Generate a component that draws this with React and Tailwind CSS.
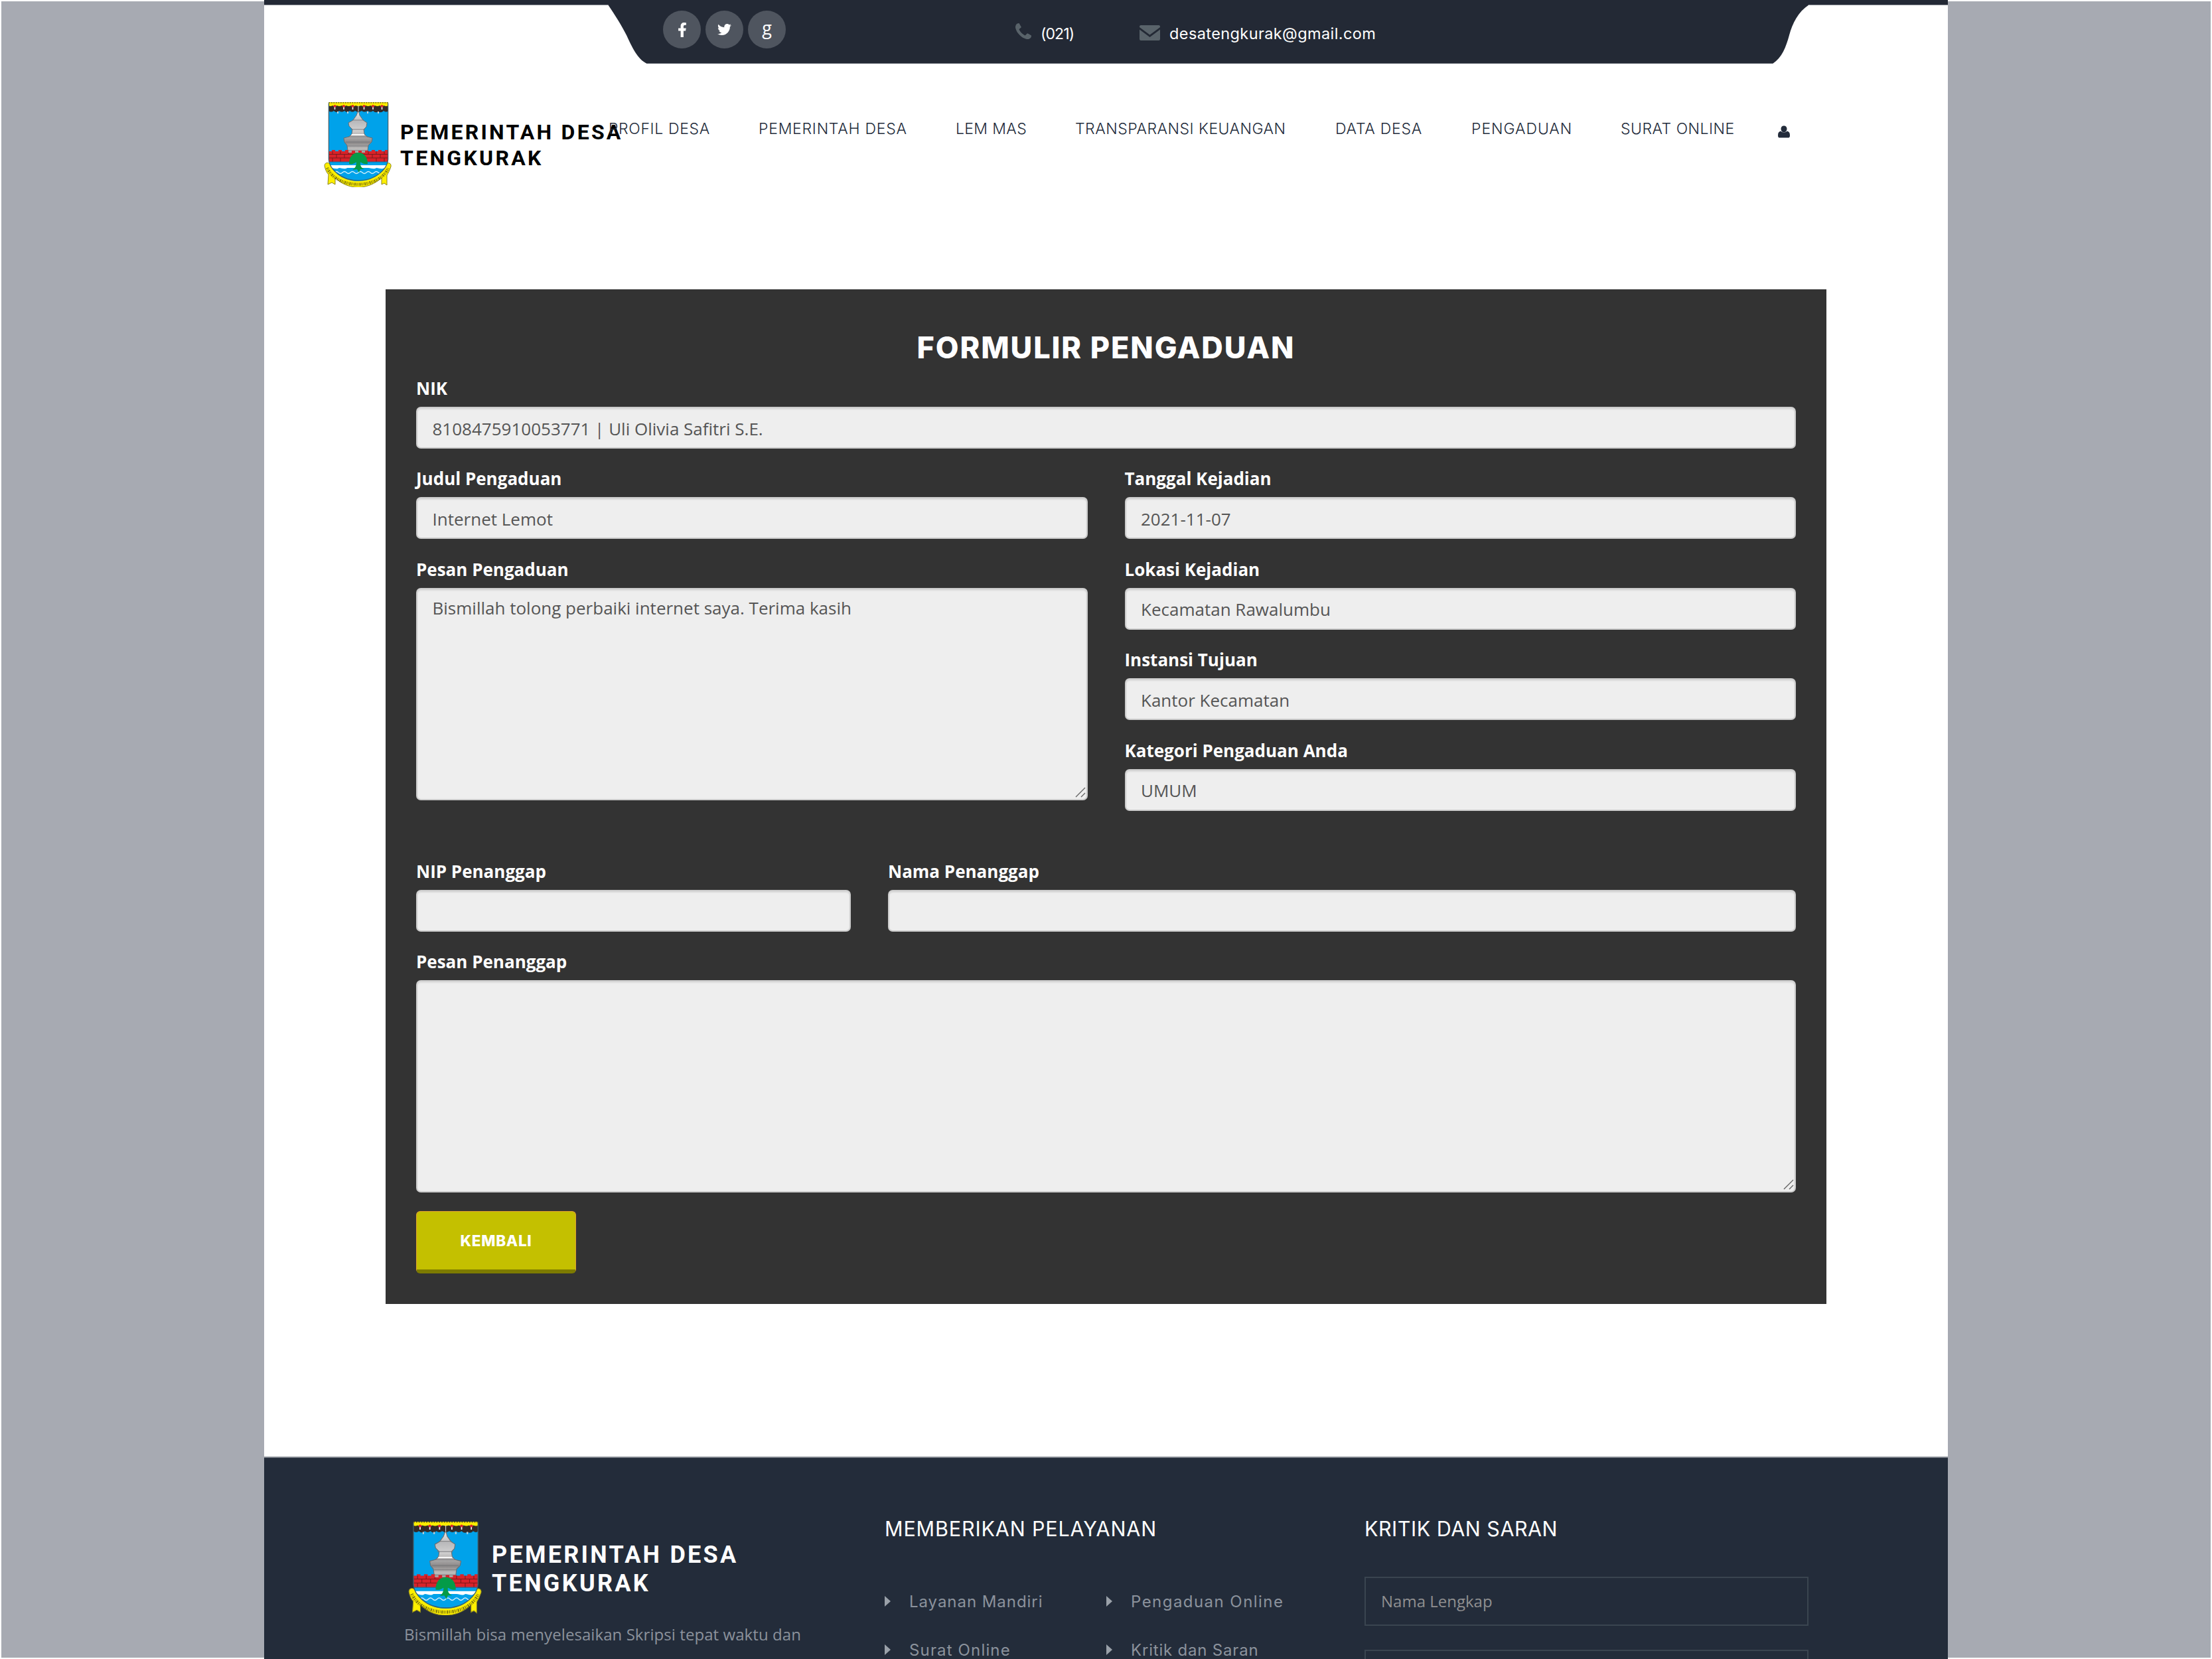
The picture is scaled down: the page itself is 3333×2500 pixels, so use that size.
import { FaFacebookF, FaTwitter } from "react-icons/fa";

function Crest({ className, id }) {
  const drops = [16.5, 30, 43.5, 60.5, 74, 87.5];
  return (
    <svg viewBox="0 0 102 128" preserveAspectRatio="none" className={className}>
      <defs>
        <clipPath id={`${id}-shield`}>
          <path d="M7.3 0H96.7V86C96 99 80 119 52 119C24 119 8 99 7.3 86Z" />
        </clipPath>
        <linearGradient id={`${id}-stone`} x1="0" x2="0" y1="0" y2="1">
          <stop offset="0" stopColor="#f4f4f4" />
          <stop offset="0.25" stopColor="#b9b9bb" />
          <stop offset="0.45" stopColor="#d0d0d0" />
          <stop offset="0.6" stopColor="#a9a7a7" />
          <stop offset="0.72" stopColor="#8b8888" />
          <stop offset="0.85" stopColor="#bdbbba" />
          <stop offset="1" stopColor="#999796" />
        </linearGradient>
      </defs>
      <path d="M1 96C1 91 6 90 9 93C20 122 84 122 93 93C97 90 102 92 101 97C99 103 97 107 95 110V125L91 122L87 124V114C66 133 37 133 17 114V124L12 121L6 124L7 109C4 106 2 101 1 96Z" fill="#fff000" stroke="#8a8420" strokeWidth="1" />
      <g clipPath={`url(#${id}-shield)`}>
        <rect width="102" height="128" fill="#00a2ea" />
        <path d="M52 12L54 20L57 24L59 27L65 31L64 37L60 41L61 48L65 52L73 54L72 60L67 65L66 73V80H36V73L35 65L31 60L30 54L38 52L42 48L43 41L38 36L37 31L44 27L46 24L49 20Z" fill={`url(#${id}-stone)`} stroke="#6d6d70" strokeWidth="1" />
        <path d="M43 27H60M40 41H62M37 52H66M33 60H70M36 66H67M36 73H66" stroke="#77777a" strokeWidth="0.9" />
        <path d="M42 48H61V50H41Z" fill="#f7f7f7" />
        <path d="M7 74H12V72H17V74H22V72H27V74H32V72H37V76H42V73H47V76H52V73H57V76H62V73H67V74H72V72H77V74H82V72H87V74H92V72H98V90H7Z" fill="#d8232a" />
        <path d="M7 78.5H98M7 84H98M13 74V78M25 74V78M37 76V78M67 74V78M79 74V78M91 74V78M19 79V84M31 79V84M73 79V84M85 79V84M13 84V90M25 84V90M79 84V90M91 84V90" stroke="#7b1a1c" strokeWidth="1" />
        <path d="M7 90H98" stroke="#1d6e9c" strokeWidth="1.2" />
        <path d="M0 95H102V99C98 102 95 99 91 99C87 102 83 99 79 99C75 102 71 99 67 99H35C31 102 27 99 23 99C19 102 15 99 11 99H0Z" fill="#fff" />
        <path d="M16 106Q19 103 22 106T28 106T34 106T40 106T46 106T52 106T58 106T64 106T70 106T76 106T82 106T88 106" fill="none" stroke="#d3effb" strokeWidth="1.3" />
        <path d="M38 93C38 82 44 76 52 76C60 76 66 82 66 93C61 94 58 92 55 90C54 96 57 99 61 101L55 101L53 106L50 101L43 102C48 99 49 95 49 90C45 93 42 94 38 93Z" fill="#049b48" />
        <path d="M7 5H97V13Q94 16 90 13Q86 17 82 14Q78 17 74 13Q70 16 66 13Q61 16 57 13Q52 16 47 13Q43 16 39 13Q35 17 31 13Q27 16 23 13Q19 17 15 13Q11 16 7 13Z" fill="#332a28" />
        <path d="M7 0H97V5Q94 7 90.5 5Q88 7 84 5Q81 7 77 5Q74 7 70 5Q67 7 63 5Q60 7 56 5Q52 7 48 5Q45 7 41 5Q37 7 34 5Q30 7 27 5Q23 7 20 5Q16 7 13 5Q10 7 7 5Z" fill="#fdec00" />
        {drops.map((x) => (
          <g key={x}>
            <circle cx={x} cy="6" r="2" fill="#e0242b" />
            <path d={`M${x} 7.5V11`} stroke="#fff" strokeWidth="1.6" />
          </g>
        ))}
        <path d="M21 14V17M36 14V17M66 14V17M82 14V17" stroke="#c9d3d8" strokeWidth="2" />
        <path d="M52 5V14" stroke="#d9d9d9" strokeWidth="1" />
      </g>
      <path d="M7.3 1.5V86C8 99 24 118 52 118C80 118 96 99 96.7 86V1.5" fill="none" stroke="#3f5c69" strokeWidth="1.2" />
      <path d="M7.3 0.7H96.7" stroke="#6b651c" strokeWidth="1.4" strokeDasharray="2 1.5" />
      <path d="M5 99C20 132 83 132 97 99" fill="none" stroke="#5a5510" strokeWidth="4.4" strokeDasharray="1.3 1.2 0.8 1.1 2 1.2" opacity="0.75" />
    </svg>
  );
}

function PhoneIcon() {
  return (
    <svg viewBox="0 128 1408 1408" className="mt-[4px] h-[24px] w-[24px] shrink-0" fill="#59636a">
      <path d="M1408 1240q0 27-10 70.5t-20.5 68.5q-21 50-122 106-94 51-186 51-27 0-53-3.5t-57.5-12.5-47-14.5-55.5-20.5-49-18q-98-35-175-83-127-79-264-216t-216-264q-48-77-83-175-3-9-18-49t-20.5-55.5-14.5-47-12.5-57.5-3.5-53q0-92 51-186 56-101 106-122 25-10 68.5-20.5t70.5-10.5q14 0 21 3 18 6 53 76 11 19 30 54t35 63.5 31 53.5q3 4 17.5 25t21.5 35.5 7 28.5q0 20-28.5 50t-62 55-62 53-28.5 46q0 9 5 22.5t8.5 20.5 14 24 11.5 19q76 137 174 235t235 174q2 1 19 11.5t24 14 20.5 8.5 22.5 5q18 0 46-28.5t53-62 55-62 50-28.5q14 0 28.5 7t35.5 21.5 25 17.5q25 15 53.5 31t63.5 35 54 30q70 35 76 53 3 7 3 21z" />
    </svg>
  );
}

const nav = [
  ["PROFIL DESA", "w-[226px] tracking-[0.65px]"],
  ["PEMERINTAH DESA", "w-[297px] tracking-[0.75px]"],
  ["LEM MAS", "w-[180px] tracking-[0.35px]"],
  ["TRANSPARANSI KEUANGAN", "w-[392px] tracking-[0.5px]"],
  ["DATA DESA", "w-[205px] tracking-[0.75px]"],
  ["PENGADUAN", "w-[225px] tracking-[0.95px]"],
  ["SURAT ONLINE", "w-[236px] tracking-[0.5px]"],
];

function TopBar() {
  return (
    <div>
      <div className="h-[7px] bg-[#232935]" />
      <div className="flex h-[89px]">
        <div className="h-[1px] w-[518px] bg-[#8f939a]" />
        <svg viewBox="0 0 59 89" className="h-[89px] w-[59px] shrink-0" fill="#232935">
          <path d="M0 0C11 16 21 32 28 46C36 63 44 82 59 89H59V0Z" />
        </svg>
        <div className="flex flex-1 items-start border-b border-[#5b606a] bg-[#232935]">
          <div className="ml-[24px] mt-[9px] flex gap-[7px]">
            <div className="flex size-[57px] items-center justify-center rounded-full bg-[#4f555f]">
              <FaFacebookF className="size-[22px] text-white" />
            </div>
            <div className="flex size-[57px] items-center justify-center rounded-full bg-[#4f555f]">
              <FaTwitter className="size-[21px] text-white" />
            </div>
            <div className="flex size-[57px] items-center justify-center rounded-full bg-[#4f555f] pb-[7px] font-['Open_Sans',sans-serif] text-[27px] leading-none font-medium text-white">
              g
            </div>
          </div>
          <div className="ml-[346px] mt-[24px] flex w-[187px] gap-[14px]">
            <PhoneIcon />
            <span className="font-['Inter',sans-serif] text-[23px] leading-[40px] tracking-[-0.9px] text-white">(021)</span>
          </div>
          <div className="mt-[24px] flex gap-[14px]">
            <svg viewBox="0 0 31 23" className="mt-[7px] h-[23px] w-[31px]" fill="#59636a">
              <path d="M2 0H29Q31 0 31 2V3L15.5 14.5L0 3V2Q0 0 2 0ZM0 6.5L15.5 18L31 6.5V21Q31 23 29 23H2Q0 23 0 21Z" />
            </svg>
            <span className="font-['Inter',sans-serif] text-[23.5px] leading-[40px] tracking-[0.4px] text-white">desatengkurak@gmail.com</span>
          </div>
        </div>
        <svg viewBox="0 0 55 89" className="h-[89px] w-[55px] shrink-0" fill="#232935">
          <path d="M55 0C38 11 30 28 25 46C20 64 14 80 0 89V0Z" />
        </svg>
        <div className="h-[1px] w-[209px] bg-[#8f939a]" />
      </div>
    </div>
  );
}

function Field({ label, value, area, className = "" }) {
  return (
    <div className={`mb-[27.4px] flex flex-col ${className}`}>
      <label className="h-[46px] text-[26px] leading-[36px] font-bold text-white">{label}</label>
      {area ? (
        <div className="relative h-[320px] rounded-[7px] border-2 border-[#ccc] bg-[#eee] px-[22.5px] pt-[10px] text-[26px] leading-[36px] text-[#555] shadow-[inset_0_2px_2px_rgba(0,0,0,0.09)]">
          {value}
          <svg viewBox="0 0 16 16" className="absolute right-[1px] bottom-[2px] size-[16px]" stroke="#666" strokeWidth="1.4">
            <path d="M1 15L15 1M9 15L15 9" />
          </svg>
        </div>
      ) : (
        <div className="h-[63px] rounded-[7px] border-2 border-[#ccc] bg-[#eee] px-[22.5px] pt-[12.5px] text-[26px] leading-[36px] text-[#555] shadow-[inset_0_2px_2px_rgba(0,0,0,0.09)]">
          {value}
        </div>
      )}
    </div>
  );
}

function FooterLink({ children, className }) {
  return (
    <div className="flex h-[73px] gap-[28px]">
      <svg viewBox="0 0 9 16" className="mt-[10px] h-[16px] w-[9px]" fill="#9aa1a9">
        <path d="M0 0L9 8L0 16Z" />
      </svg>
      <span className={`font-['Inter',sans-serif] text-[24px] leading-[37px] whitespace-nowrap text-[#8b929c] ${className}`}>{children}</span>
    </div>
  );
}

export default function App() {
  return (
    <div className="flex h-[2500px] w-[3333px] overflow-hidden bg-white font-['Open_Sans',sans-serif]">
      <div className="w-[398px] shrink-0 border-2 border-r-0 border-white bg-[#a7aab2]" />
      <div className="flex w-[2537px] shrink-0 flex-col">
        <TopBar />

        <header className="flex h-[340px] items-start pt-[58px] pl-[90px]">
          <Crest id="top" className="h-[128px] w-[102px] shrink-0" />
          <div className="mt-[26px] ml-[13px] w-[314px] shrink-0 font-['Roboto',sans-serif] text-[32px] leading-[39px] font-bold whitespace-nowrap text-black">
            <div className="tracking-[3.25px]">PEMERINTAH DESA</div>
            <div className="tracking-[3.3px]">TENGKURAK</div>
          </div>
          <nav className="mt-[25px] flex font-['Inter',sans-serif] text-[23px] leading-[30px] font-light whitespace-nowrap text-[#232c3b]">
            {nav.map(([t, c]) => (
              <a key={t} className={c}>{t}</a>
            ))}
            <svg viewBox="0 0 20 20" className="mt-[10px] ml-[1px] h-[19px] w-[18px]" fill="#232c3b">
              <path d="M10 0C13 0 15 2 15 5C15 8 13 11 10 11C7 11 5 8 5 5C5 2 7 0 10 0ZM5 9C7 12 13 12 15 9C18.5 9.5 20 12 20 16C20 19 19 20 17 20H3C1 20 0 19 0 16C0 12 1.5 9.5 5 9Z" />
            </svg>
          </nav>
        </header>

        <main className="ml-[183px] h-[1529px] w-[2171px] shrink-0 bg-[#333] px-[46px] pt-[63px]">
          <h1 className="mb-[18px] text-center font-['Inter',sans-serif] text-[45px] leading-[50px] font-extrabold tracking-[1.9px] text-white">
            FORMULIR PENGADUAN
          </h1>
          <Field label="NIK" value="8108475910053771 | Uli Olivia Safitri S.E." />
          <div className="grid grid-cols-2 gap-x-[56px]">
            <div>
              <Field label="Judul Pengaduan" value="Internet Lemot" />
              <Field area label="Pesan Pengaduan" value="Bismillah tolong perbaiki internet saya. Terima kasih" />
            </div>
            <div>
              <Field label="Tanggal Kejadian" value="2021-11-07" />
              <Field label="Lokasi Kejadian" value="Kecamatan Rawalumbu" />
              <Field label="Instansi Tujuan" value="Kantor Kecamatan" />
              <Field label="Kategori Pengaduan Anda" value="UMUM" />
            </div>
          </div>
          <div className="mt-[46px] flex gap-[56px]">
            <Field label="NIP Penanggap" className="w-[655px]" />
            <Field label="Nama Penanggap" className="flex-1" />
          </div>
          <Field area label="Pesan Penanggap" />
          <button className="flex h-[94px] w-[241px] items-center justify-center rounded-[6px] border border-b-[6px] border-[#e0a030] border-b-[#7d7b00] bg-[#c4c000] pt-[2px] font-['Inter',sans-serif] text-[22.5px] font-extrabold tracking-[0.7px] text-white">
            KEMBALI
          </button>
        </main>

        <footer className="mt-[230px] flex h-[305px] shrink-0 items-start border-t-2 border-[#7f848d] bg-[#232c3a] pl-[211px] whitespace-nowrap">
          <div className="w-[724px] shrink-0 pt-[96px]">
            <div className="flex items-start pl-[6px]">
              <Crest id="bottom" className="h-[141px] w-[111px] shrink-0" />
              <div className="mt-[29px] ml-[15px] font-['Roboto',sans-serif] text-[36px] leading-[43px] font-bold text-white">
                <div className="tracking-[3.25px]">PEMERINTAH DESA</div>
                <div className="tracking-[3.3px]">TENGKURAK</div>
              </div>
            </div>
            <p className="mt-[11px] text-[24px] leading-[36px] tracking-[0.07px] text-[#8b929c]">
              Bismillah bisa menyelesaikan Skripsi tepat waktu dan
            </p>
          </div>
          <div className="w-[723px] shrink-0 pt-[87px]">
            <h2 className="mb-[71px] font-['Inter',sans-serif] text-[30.5px] leading-[40px] tracking-[0.85px] text-white">MEMBERIKAN PELAYANAN</h2>
            <div className="flex">
              <div className="w-[334px]">
                <FooterLink className="tracking-[0.95px]">Layanan Mandiri</FooterLink>
                <FooterLink className="tracking-[1.15px]">Surat Online</FooterLink>
              </div>
              <div>
                <FooterLink className="tracking-[1.45px]">Pengaduan Online</FooterLink>
                <FooterLink className="tracking-[0.8px]">Kritik dan Saran</FooterLink>
              </div>
            </div>
          </div>
          <div className="w-[669px] shrink-0 pt-[87px]">
            <h2 className="mb-[52px] font-['Inter',sans-serif] text-[30.5px] leading-[40px] tracking-[0.5px] text-white">KRITIK DAN SARAN</h2>
            <div className="mb-[36px] h-[74px] border-2 border-[#3a4550] pt-[17px] pl-[23px] text-[24px] leading-[36px] text-[#8f8f90]">Nama Lengkap</div>
            <div className="h-[74px] border-2 border-[#3a4550]" />
          </div>
        </footer>
      </div>
      <div className="flex-1 border-2 border-l-0 border-white bg-[#a7aab2]" />
    </div>
  );
}
